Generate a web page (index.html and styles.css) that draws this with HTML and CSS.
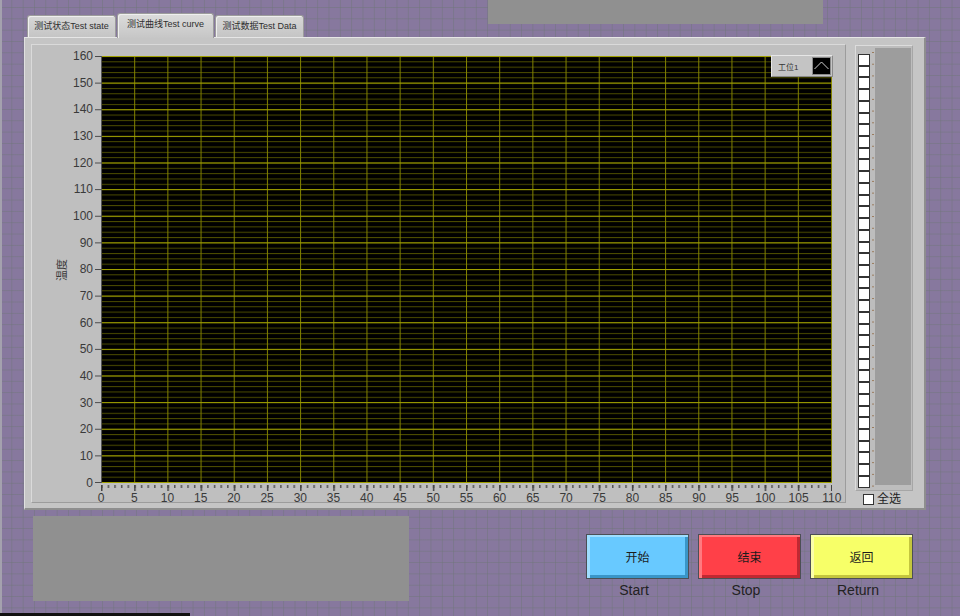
FILE: index.html
```html
<!DOCTYPE html>
<html lang="zh">
<head>
<meta charset="utf-8">
<title>测试曲线</title>
<link rel="stylesheet" href="styles.css">
</head>
<body>
<div class="screen">
  <div class="top-row">
    <div class="tabs">
      <div class="tab">测试状态Test state</div>
      <div class="tab tab-active">测试曲线Test curve</div>
      <div class="tab">测试数据Test Data</div>
    </div>
    <div class="status-bar"></div>
  </div>

  <div class="tab-panel">
    <div class="graph">
      <div class="y-title"><span>温度</span></div>
      <div class="y-labels">
        <span>160</span><span>150</span><span>140</span><span>130</span><span>120</span><span>110</span><span>100</span><span>90</span><span>80</span><span>70</span><span>60</span><span>50</span><span>40</span><span>30</span><span>20</span><span>10</span><span>0</span>
      </div>
      <svg class="y-ticks" width="7" height="427" viewBox="0 0 7 427">
        <defs>
          <pattern id="yt" width="7" height="26.625" patternUnits="userSpaceOnUse">
            <rect x="1" y="0" width="6" height="1" fill="#4a4a4a"/>
          </pattern>
        </defs>
        <rect width="7" height="427" fill="url(#yt)"/>
      </svg>
      <div class="plot-col">
        <div class="plot">
          <svg class="plot-svg" width="731" height="427" viewBox="0 0 731 427">
            <defs>
              <pattern id="hmin" width="731" height="5.325" patternUnits="userSpaceOnUse">
                <rect width="731" height="1" fill="#4c4c00"/>
              </pattern>
              <pattern id="vmaj" width="33.1818" height="427" patternUnits="userSpaceOnUse">
                <rect width="1" height="427" fill="#828200"/>
              </pattern>
              <pattern id="hmaj" width="731" height="26.625" patternUnits="userSpaceOnUse">
                <rect width="731" height="1" fill="#a0a000"/>
              </pattern>
            </defs>
            <rect width="731" height="427" fill="#000"/>
            <rect width="731" height="427" fill="url(#hmin)"/>
            <rect width="731" height="427" fill="url(#vmaj)"/>
            <rect width="731" height="427" fill="url(#hmaj)"/>
            <rect x="0" y="0" width="1" height="427" fill="#555"/>
          </svg>
          <div class="legend">
            <span class="legend-name">工位1</span>
            <span class="legend-swatch">
              <svg width="17" height="16" viewBox="0 0 17 16"><polyline points="1.5,11 8.5,4 15.5,11" fill="none" stroke="#d0d0d0" stroke-width="1"/></svg>
            </span>
          </div>
        </div>
        <svg class="x-ticks" width="731" height="8" viewBox="0 0 731 8">
          <defs>
            <pattern id="xmin" width="6.63636" height="8" patternUnits="userSpaceOnUse">
              <rect x="0" y="2" width="1.5" height="3" fill="#555"/>
            </pattern>
            <pattern id="xmaj" width="33.1818" height="8" patternUnits="userSpaceOnUse">
              <rect x="0" y="2" width="1.5" height="6" fill="#444"/>
            </pattern>
          </defs>
          <rect width="731" height="8" fill="url(#xmin)"/>
          <rect width="731" height="8" fill="url(#xmaj)"/>
        </svg>
        <div class="x-labels">
          <span>0</span><span>5</span><span>10</span><span>15</span><span>20</span><span>25</span><span>30</span><span>35</span><span>40</span><span>45</span><span>50</span><span>55</span><span>60</span><span>65</span><span>70</span><span>75</span><span>80</span><span>85</span><span>90</span><span>95</span><span>100</span><span>105</span><span>110</span>
        </div>
      </div>
    </div>

    <div class="side">
      <div class="list">
        <div class="checks">
          <i></i><i></i><i></i><i></i><i></i><i></i><i></i><i></i><i></i><i></i>
          <i></i><i></i><i></i><i></i><i></i><i></i><i></i><i></i><i></i><i></i>
          <i></i><i></i><i></i><i></i><i></i><i></i><i></i><i></i><i></i><i></i>
          <i></i><i></i><i></i><i></i><i></i><i></i><i></i>
        </div>
        <div class="marks"></div>
        <div class="list-area"></div>
      </div>
      <div class="select-all"><span class="box"></span><span>全选</span></div>
    </div>
  </div>

  <div class="bottom-row">
    <div class="msg-box"></div>
    <div class="buttons">
      <div class="btn-col">
        <div class="btn btn-start">开始</div>
        <div class="btn-caption">Start</div>
      </div>
      <div class="btn-col">
        <div class="btn btn-stop">结束</div>
        <div class="btn-caption">Stop</div>
      </div>
      <div class="btn-col">
        <div class="btn btn-return">返回</div>
        <div class="btn-caption">Return</div>
      </div>
    </div>
  </div>
  <div class="edge-line"></div>
</div>
</body>
</html>
```

FILE: styles.css
```css
html, body {
  margin: 0;
  padding: 0;
}

body {
  width: 960px;
  height: 616px;
  overflow: hidden;
  font-family: "Liberation Sans", "Noto Sans CJK SC", sans-serif;
  color: #333;
  background-color: #87789e;
  background-image:
    linear-gradient(to right, #a4a1ae 2px, transparent 2px),
    linear-gradient(to right, rgba(112, 118, 122, 0.5) 1px, transparent 1px),
    linear-gradient(to bottom, rgba(112, 118, 122, 0.5) 1px, transparent 1px);
  background-size: 100% 100%, 11.33px 11.33px, 11.33px 11.33px;
  background-repeat: no-repeat, repeat, repeat;
  background-position: 0 0, 0 0, 0 7px;
}

.screen {
  width: 960px;
  height: 616px;
  overflow: hidden;
}

/* ---------- top row: tabs + status bar ---------- */
.top-row {
  display: flex;
  align-items: flex-start;
  height: 37px;
}

.tabs {
  display: flex;
  align-items: flex-end;
  height: 37px;
  margin-left: 27px;
}

.tab {
  box-sizing: border-box;
  width: 89px;
  height: 22px;
  margin-right: 1px;
  font-size: 9px;
  line-height: 20px;
  text-align: center;
  white-space: nowrap;
  color: #2e2e2e;
  background: linear-gradient(#d7d7d7, #c5c5c5);
  border: 1px solid #9c9c9c;
  border-bottom: 0;
  border-radius: 3px 3px 0 0;
  box-shadow: inset 1px 1px 0 #efefef;
}

.tab:last-child {
  margin-right: 0;
}

.tab-active {
  width: 97px;
  height: 25px;
  margin-bottom: -1px;
  line-height: 21px;
  position: relative;
  z-index: 1;
  background: linear-gradient(#dcdcdc, #c6c6c6);
}

.status-bar {
  width: 335px;
  height: 24px;
  margin-left: 184px;
  background: #909090;
}

/* ---------- tab panel ---------- */
.tab-panel {
  box-sizing: border-box;
  display: flex;
  align-items: flex-start;
  width: 902px;
  height: 473px;
  margin-left: 24px;
  padding: 6px 0 0 6px;
  background: #c5c5c5;
  border-top: 1px solid #e6e6e6;
  border-left: 1px solid #e0e0e0;
  border-right: 2px solid #8e8e8e;
  border-bottom: 2px solid #8e8e8e;
}

.graph {
  box-sizing: border-box;
  display: flex;
  align-items: flex-start;
  width: 815px;
  height: 459px;
  background: #bfbfbf;
  border: 1px solid;
  border-color: #dadada #9c9c9c #9c9c9c #dadada;
}

.y-title {
  width: 12px;
  height: 427px;
  margin-left: 23px;
  margin-top: 11px;
  display: flex;
  align-items: center;
  justify-content: center;
}

.y-title span {
  display: inline-block;
  white-space: nowrap;
  font-size: 11px;
  color: #3a3a3a;
  transform: rotate(-90deg);
}

.y-labels {
  width: 27px;
  height: 440.5px;
  margin-top: 4px;
  display: flex;
  flex-direction: column;
  justify-content: space-between;
  align-items: flex-end;
}

.y-labels span {
  display: block;
  height: 14px;
  line-height: 14px;
  font-size: 12px;
  color: #3a3a3a;
  padding-right: 1px;
}

.y-ticks {
  display: block;
  margin-top: 11px;
}

.plot-col {
  margin-top: 11px;
  width: 731px;
}

.plot {
  position: relative;
  width: 731px;
  height: 427px;
}

.plot-svg {
  display: block;
}

.legend {
  position: absolute;
  top: -1px;
  right: -1px;
  box-sizing: border-box;
  width: 62px;
  height: 22px;
  display: flex;
  align-items: center;
  justify-content: space-between;
  padding: 0 2px 0 6px;
  background: #c4c4c4;
  border: 1px solid;
  border-color: #e6e6e6 #8a8a8a #8a8a8a #e6e6e6;
}

.legend-name {
  font-size: 8px;
  color: #333;
  white-space: nowrap;
}

.legend-swatch {
  display: block;
  width: 17px;
  height: 16px;
  background: #000;
  box-shadow: 0 0 0 1px #8a8a8a;
}

.legend-swatch svg {
  display: block;
}

.x-ticks {
  display: block;
}

.x-labels {
  display: flex;
  justify-content: space-between;
  width: 755px;
  margin-left: -12px;
  margin-top: 1px;
}

.x-labels span {
  display: block;
  width: 24px;
  text-align: center;
  font-size: 12px;
  line-height: 12px;
  color: #3a3a3a;
}

/* ---------- side list ---------- */
.side {
  margin-left: 9px;
  margin-top: 1px;
}

.list {
  box-sizing: border-box;
  display: flex;
  align-items: flex-start;
  width: 58px;
  height: 446px;
  padding: 0 1px 0 2px;
  background: #bdbdbd;
  border: 1px solid;
  border-color: #dcdcdc #a6a6a6 #a6a6a6 #dcdcdc;
}

.checks {
  width: 12px;
  margin-top: 8px;
  display: flex;
  flex-direction: column;
}

.checks i {
  display: block;
  box-sizing: border-box;
  width: 12px;
  height: 11.73px;
  background: #fff;
  border: 1px solid #333;
}

.marks {
  width: 5px;
  height: 440px;
  margin-top: 4px;
  background-image: linear-gradient(to bottom, #9a7b5c 0, #9a7b5c 1px, transparent 1px);
  background-size: 2px 11.73px;
  background-repeat: repeat-y;
  background-position: 2px 2px;
}

.list-area {
  width: 36px;
  height: 437px;
  margin-top: 2px;
  background: #9d9d9d;
}

.select-all {
  display: flex;
  align-items: center;
  gap: 3px;
  margin-top: 2px;
  padding-left: 8px;
  font-size: 12px;
  line-height: 12px;
  color: #222;
}

.select-all .box {
  display: block;
  box-sizing: border-box;
  width: 11px;
  height: 11px;
  background: #fff;
  border: 1px solid #333;
}

/* ---------- bottom row ---------- */
.bottom-row {
  display: flex;
  align-items: flex-start;
  height: 91px;
}

.msg-box {
  width: 376px;
  height: 85px;
  margin-left: 33px;
  margin-top: 6px;
  background: #909090;
}

.buttons {
  display: flex;
  gap: 9px;
  margin-left: 177px;
  margin-top: 24px;
}

.btn-col {
  display: flex;
  flex-direction: column;
  align-items: center;
}

.btn {
  box-sizing: border-box;
  width: 103px;
  height: 45px;
  display: flex;
  align-items: center;
  justify-content: center;
  font-size: 12px;
  color: #1c1c1c;
  border: 1px solid #4c4f55;
}

.btn-start {
  background: #68c9ff;
  box-shadow: inset 3px 2px 0 #9fdeff, inset -3px -3px 0 #3a95c8;
}

.btn-stop {
  background: #ff4048;
  box-shadow: inset 3px 2px 0 #ff7a80, inset -3px -3px 0 #c02832;
}

.btn-return {
  background: #f7ff68;
  box-shadow: inset 3px 2px 0 #fbffa8, inset -3px -3px 0 #c4c63e;
}

.btn-caption {
  margin-top: 3px;
  margin-right: 7px;
  font-size: 14px;
  line-height: 17px;
  color: #222;
}

.edge-line {
  width: 190px;
  height: 3px;
  margin-top: 12px;
  background: #111;
}
```
